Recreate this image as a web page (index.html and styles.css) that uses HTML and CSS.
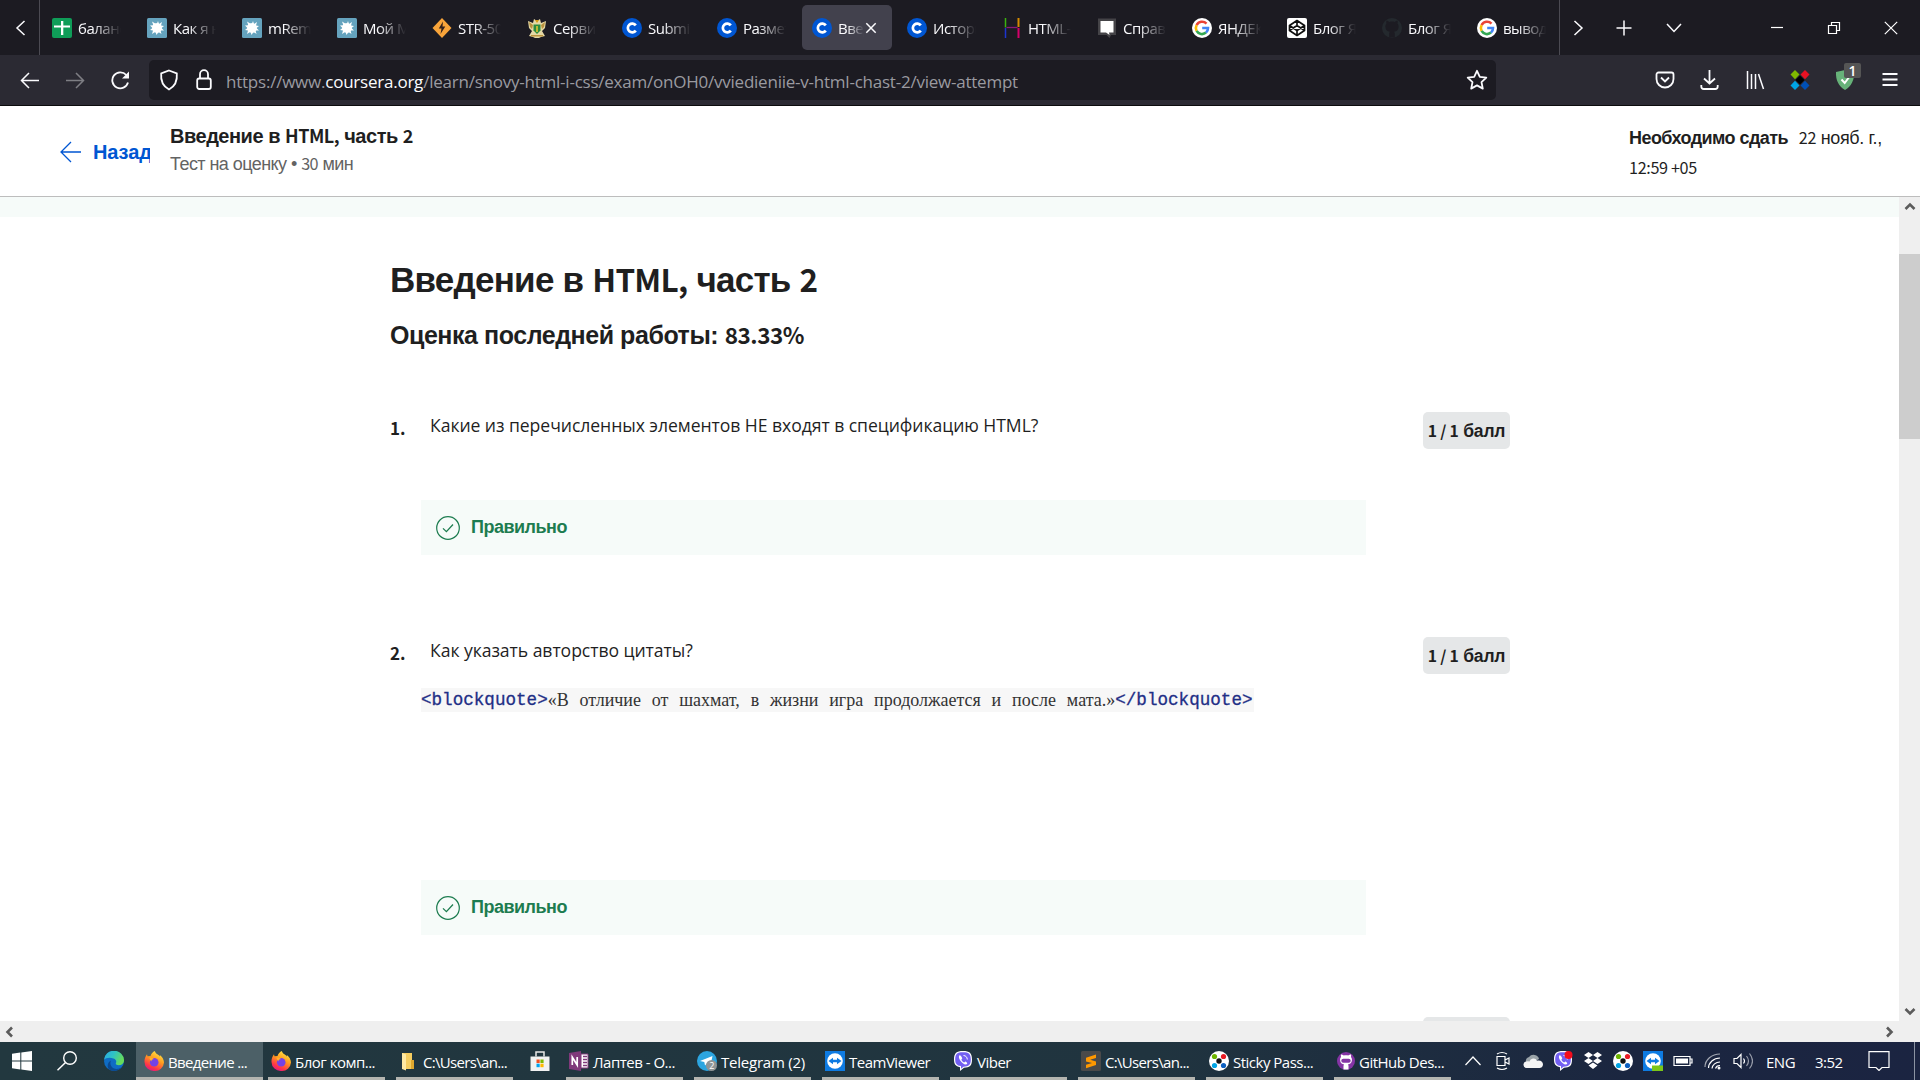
FILE: index.html
```html
<!DOCTYPE html>
<html lang="ru">
<head>
<meta charset="utf-8">
<title>Введение в HTML, часть 2</title>
<link rel="stylesheet" href="styles.css">
</head>
<body>
<svg class="defs" width="0" height="0" aria-hidden="true">
  <symbol id="coursera" viewBox="0 0 20 20"><circle cx="10" cy="10" r="10" fill="#0056d2"/><path d="M13.800 7.400A4.400 4.400 0 1 0 13.800 12.600" fill="none" stroke="#fff" stroke-width="2.700"/></symbol>
  <symbol id="habr" viewBox="0 0 20 20"><rect width="20" height="20" rx="1.500" fill="#65a3be"/><path d="M10 5.500L11 3l1 3 3-2-1 3.500 3 .5-2.500 2 2.500 2.500-3.500 0 1 3.500-3-2L9.500 17l-1-3.200L5 16l1-3.500-3-.5 2.500-2L3 7.500l3.300-.3L5 3.500l3.200 2z" fill="#fff"/><circle cx="10" cy="10" r="4.800" fill="#fff"/></symbol>
  <symbol id="google" viewBox="0 0 20 20"><circle cx="10" cy="10" r="10" fill="#fff"/><path d="M14.500 5.600A6.200 6.200 0 0 0 4.600 7.100" fill="none" stroke="#ea4335" stroke-width="2.600"/><path d="M4.600 7.100A6.200 6.200 0 0 0 4.600 12.900" fill="none" stroke="#fbbc05" stroke-width="2.600"/><path d="M4.600 12.900A6.200 6.200 0 0 0 14 14.600" fill="none" stroke="#34a853" stroke-width="2.600"/><path d="M14 14.600A6.200 6.200 0 0 0 16 10H10.200" fill="none" stroke="#4285f4" stroke-width="2.600"/></symbol>
  <symbol id="sticky" viewBox="0 0 20 24" preserveAspectRatio="none"><path d="M5 0l4.500 5.500L5 11 .5 5.500z" fill="#7fba00"/><path d="M15 0l4.500 5.500L15 11l-4.500-5.500z" fill="#e81123"/><path d="M10 6.500l4.500 5.500-4.500 5.500L5.500 12z" fill="#000"/><path d="M5 13l4.500 5.500L5 24 .5 18.500z" fill="#00a4e4"/><path d="M15 13l4.500 5.500L15 24l-4.500-5.500z" fill="#0050b5"/></symbol>
  <symbol id="stickyround" viewBox="0 0 20 20"><circle cx="10" cy="10" r="10" fill="#fff"/><circle cx="5.500" cy="5.500" r="2.600" fill="#6cb500"/><circle cx="14.500" cy="5.500" r="2.600" fill="#e81c24"/><circle cx="10" cy="10" r="2.700" fill="#111"/><circle cx="5.500" cy="14.500" r="2.600" fill="#00a4e4"/><circle cx="14.500" cy="14.500" r="2.600" fill="#0b5fc0"/></symbol>
  <linearGradient id="ffg" x1=".8" y1="0" x2=".3" y2="1"><stop offset="0" stop-color="#fff04a"/><stop offset=".45" stop-color="#ff9a1f"/><stop offset=".8" stop-color="#ff3647"/><stop offset="1" stop-color="#e31587"/></linearGradient>
  <symbol id="firefox" viewBox="0 0 20 20"><path d="M10.800 0c.5 2 2 3 4 4.300l1.200 1.200-.2-1.500c2.400 1.800 4.200 4.600 4.200 7.600A9.300 9 0 0 1 10.300 20 9.500 9.200 0 0 1 .5 11C.4 8 1.200 5.600 3 3.300l.5 2L6.500 5C7.300 2.600 8.800 1 10.800 0z" fill="url(#ffg)"/><circle cx="10.200" cy="11.200" r="4.300" fill="#7542e5"/><path d="M5.500 6.600c2 0 3 .4 4.500 1.500-1.600 0-2.600 1-2.700 2.300-.8-.9-1.700-2.100-1.800-3.800z" fill="#ffb12b"/></symbol>
  <symbol id="tv" viewBox="0 0 20 20"><rect width="20" height="20" fill="#0e7be2"/><circle cx="10" cy="10" r="7.800" fill="#fff"/><path d="M3.500 10L8 6.800v2h4v-2l4.500 3.200-4.500 3.200v-2H8v2z" fill="#0e7be2"/></symbol>
  <symbol id="viber" viewBox="0 0 20 20"><path d="M10 0c6.500 0 9 2 9 8.500S16.500 16.500 11 16.800L7 20v-3.800C2.500 15.300 1 13 1 8.500 1 2 3.500 0 10 0z" fill="#fff"/><path d="M10 1.200c5.800 0 7.800 1.700 7.800 7.300s-2 7-7.300 7.200L8 17.800v-2.700C3.600 14.500 2.200 12.500 2.200 8.500 2.200 3 4.200 1.200 10 1.200z" fill="#7360f2"/><path d="M6.600 4.200c-2.600 1.600 2.300 9.300 6.300 9.400 2.200-1 1.300-2.300-.5-3.200l-1.200 1c-1.500-.5-2.500-1.800-2.800-3l.9-1.200c-.6-1.400-1.500-3-2.700-3z" fill="#fff"/><path d="M10.500 4.500c2.300.2 3.700 1.600 3.800 4" fill="none" stroke="#fff"/></symbol>
  <symbol id="octo" viewBox="0 0 20 20"><path d="M10 3.500c-1 0-1.700.2-2.500.4C6.300 3 5 2.600 4.500 2.700c-.4 1-.3 2 0 2.800C3.600 6.600 3.300 7.700 3.400 9c.2 3.300 2 4.400 4.500 4.800-.5.500-.7 1.200-.7 2v3.700h5.600v-3.700c0-.8-.2-1.500-.7-2 2.500-.4 4.300-1.500 4.500-4.800.1-1.300-.2-2.400-1.100-3.500.3-.8.4-1.800 0-2.800-.5-.1-1.800.3-3 1.200-.8-.2-1.500-.4-2.500-.4z"/></symbol>
  <symbol id="ok" viewBox="0 0 24 24"><circle cx="12" cy="12" r="11.300" fill="none" stroke="#1d7c50" stroke-width="1.200"/><path d="M7 12.400l3.400 3.200L17 8.500" fill="none" stroke="#1d7c50" stroke-width="1.300"/></symbol>
</svg>

<header class="tabbar">
  <div class="tab-scroll left"><svg width="12" height="18" viewBox="0 0 12 18"><path class="ln" d="M10.500 2L3 9l7.500 7"/></svg></div>
  <div class="tabs">
    <div class="tab"><svg class="fav" viewBox="0 0 20 20"><rect width="20" height="20" rx="2" fill="#0f9d58"/><path d="M9 3h2.300v4.500H18v2h-6.700V17H9V9.500H2v-2h7z" fill="#fff"/></svg><span class="tt">баланс</span></div>
    <div class="tab"><svg class="fav"><use href="#habr"/></svg><span class="tt">Как я на</span></div>
    <div class="tab"><svg class="fav"><use href="#habr"/></svg><span class="tt">mRemo</span></div>
    <div class="tab"><svg class="fav"><use href="#habr"/></svg><span class="tt">Мой Ma</span></div>
    <div class="tab"><svg class="fav" viewBox="0 0 20 20"><path d="M10 0l9.500 10L10 20 .5 10z" fill="#f8a43a"/><path d="M11 3.500L6.800 10.500h2.700l-1 5.500 4.800-7.500h-2.800z" fill="#34211b"/></svg><span class="tt">STR-500</span></div>
    <div class="tab"><svg class="fav" viewBox="0 0 20 20"><path d="M1 3l5 2 1-4 3 2 3-2 1 4 5-2-1 7-3 3 3 5-4 1-4 2-4-2-4-1 3-5-3-3z" fill="#e4d8a4"/><path d="M2 4l4 3-1 4-2-2zM18 4l-4 3 1 4 2-2zM4 17h12v1.500H4z" fill="#b9923d"/><path d="M6.500 6.500h7v6L10 16l-3.500-3.500z" fill="#2d8b3b"/><path d="M8 2h4l-2 3z" fill="#d59c12"/><path d="M10 8v6" stroke="#e8c92f" stroke-width="1.500"/></svg><span class="tt">Сервис</span></div>
    <div class="tab"><svg class="fav"><use href="#coursera"/></svg><span class="tt">Submis</span></div>
    <div class="tab"><svg class="fav"><use href="#coursera"/></svg><span class="tt">Размет</span></div>
    <div class="tab active"><svg class="fav"><use href="#coursera"/></svg><span class="tt">Введ</span><svg class="x" width="12" height="12" viewBox="0 0 12 12"><path class="ln" d="M1.300 1.300l9.400 9.400M10.700 1.300L1.300 10.700"/></svg></div>
    <div class="tab"><svg class="fav"><use href="#coursera"/></svg><span class="tt">Истори</span></div>
    <div class="tab"><svg class="fav" viewBox="0 0 20 20"><path d="M3.500 0v9.500" stroke="#3bb30f" stroke-width="1.500"/><path d="M3.500 10v10" stroke="#1c35d0" stroke-width="1.500"/><path d="M16.500 0v9" stroke="#d58b00" stroke-width="2"/><path d="M16.500 10v10" stroke="#d4006a" stroke-width="2"/><path d="M4.500 9.500h11" stroke="#8b1a79" stroke-width="1.300"/></svg><span class="tt">HTML-к</span></div>
    <div class="tab"><svg class="fav" viewBox="0 0 20 20"><path d="M1 .5h18v16.500h-5l-1.500 3-3-3H1z" fill="#444347"/><path d="M3.500 3h13v11.500H12L12.500 17 9 14.500H3.500z" fill="#fff"/></svg><span class="tt">Справо</span></div>
    <div class="tab"><svg class="fav"><use href="#google"/></svg><span class="tt">ЯНДЕКС</span></div>
    <div class="tab"><svg class="fav" viewBox="0 0 20 20"><rect width="20" height="20" rx="2" fill="#fff"/><path d="M10 2.500L17.500 7.500v5L10 17.500 2.500 12.500v-5zM10 2.500v5M10 12.500v5M2.500 7.500L10 12.500l7.500-5M2.500 12.500L10 7.500l7.500 5" fill="none" stroke="#111" stroke-width="1.700" stroke-linejoin="round"/></svg><span class="tt">Блог Ян</span></div>
    <div class="tab"><svg class="fav" viewBox="0 0 20 20"><circle cx="10" cy="10" r="10" fill="#24292e"/><use href="#octo" fill="#1c1b22"/></svg><span class="tt">Блог Ян</span></div>
    <div class="tab"><svg class="fav"><use href="#google"/></svg><span class="tt">вывод</span></div>
  </div>
  <div class="tab-scroll right"><svg width="12" height="18" viewBox="0 0 12 18"><path class="ln" d="M1.500 2L9 9l-7.500 7"/></svg></div>
  <div class="tab-tools">
    <svg width="16" height="16" viewBox="0 0 16 16"><path class="ln" d="M8 .5v15M.5 8h15"/></svg>
    <svg width="16" height="10" viewBox="0 0 16 10"><path class="ln" d="M1 1l7 7.500L15 1"/></svg>
  </div>
  <div class="win">
    <svg width="14" height="14" viewBox="0 0 14 14"><path class="th" d="M1 6.500h12"/></svg>
    <svg width="14" height="14" viewBox="0 0 14 14"><path class="th" d="M1.500 4.500h8v8h-8zM4.500 4.500v-3h8v8h-3"/></svg>
    <svg width="14" height="14" viewBox="0 0 14 14"><path class="th" d="M.8.8l12.400 12.400M13.200.8L.8 13.200"/></svg>
  </div>
</header>

<nav class="navbar">
  <div class="nav-left">
    <svg width="20" height="20" viewBox="0 0 20 20"><path class="ln" d="M19 10.500H1.500M9 3L1.500 10.500 9 18"/></svg>
    <svg class="dim" width="20" height="20" viewBox="0 0 20 20"><path class="ln" d="M1 10.500h17.500M11 3l7.500 7.500L11 18"/></svg>
    <svg width="20" height="20" viewBox="0 0 20 20"><path class="ln wide" d="M18 12.500A8 8 0 1 1 16.300 5"/><path d="M19 1.500v7h-7z" fill="#fbfbfe"/></svg>
  </div>
  <div class="urlbar">
    <svg width="20" height="22" viewBox="0 0 20 22"><path class="ln wide" d="M10 1.500l7.800 3c.6 6.500-1.300 12.500-7.800 16C3.500 17 1.600 11 2.200 4.500z"/></svg>
    <svg class="lock" width="16" height="22" viewBox="0 0 16 22"><rect class="ln wide" x="1.200" y="9.500" width="13.600" height="10.500" rx="2"/><path class="ln wide" d="M4 9.500V5.200a4 4 0 0 1 8 0v4.300"/></svg>
    <span class="url">https://www.<b>coursera.org</b>/learn/snovy-html-i-css/exam/onOH0/vviedieniie-v-html-chast-2/view-attempt</span>
    <svg class="star" width="22" height="22" viewBox="0 0 22 22"><path class="ln wide" d="M11 1.800l2.800 6 6.500.8-4.800 4.500 1.300 6.500L11 16.400l-5.800 3.200 1.300-6.500L1.700 8.600l6.500-.8z" stroke-linejoin="round"/></svg>
  </div>
  <div class="nav-right">
    <svg width="20" height="20" viewBox="0 0 20 20"><path class="ln wide" d="M3.500 2.500h13a2 2 0 0 1 2 2V9a8.500 8.500 0 0 1-17 0V4.500a2 2 0 0 1 2-2zM6 7.500l4 4 4-4"/></svg>
    <svg width="20" height="20" viewBox="0 0 20 20"><path class="ln wide" d="M9.500 0v13.500M4 8.500l5.500 5 5.500-5M1.300 15v1.500a2.500 2.500 0 0 0 2.500 2.500h11.400a2.500 2.500 0 0 0 2.500-2.500V15"/></svg>
    <svg width="20" height="20" viewBox="0 0 20 20"><path class="ln" d="M2.500 1v18M6.500 4v15M10.500 4v15M13.500 4l5 15"/></svg>
    <svg width="20" height="20"><use href="#sticky" width="20" height="20"/></svg>
    <div class="guard"><svg width="20" height="20" viewBox="0 0 20 20"><path d="M10 0l9 2c.4 8-2.500 14-9 18C3.500 16 .6 10 1 2z" fill="#67b279"/><path d="M6.500 9.500l3.200 3.500 4.500-6" fill="none" stroke="#fff" stroke-width="2"/></svg><i>1</i></div>
    <svg width="20" height="20" viewBox="0 0 20 20"><path class="ln wide" d="M2.500 4h15M2.500 9.500h15M2.500 15h15"/></svg>
  </div>
</nav>

<div class="page-head">
  <a class="back"><svg width="21" height="22" viewBox="0 0 21 22"><path d="M21 11H1M11 1L1 11l10 10" fill="none" stroke="#0056d2" stroke-width="1.300"/></svg><span>Назад</span></a>
  <div class="head-title">
    <div class="ht">Введение в <span class="src">HTML,</span> часть <span class="src">2</span></div>
    <div class="hs">Тест на оценку • <span class="src">30</span> мин</div>
  </div>
  <div class="due"><b>Необходимо сдать</b> <span class="date"><span class="src">22</span> нояб. г.,</span><br><span class="src">12:59 +05</span></div>
</div>

<div class="viewport">
  <main class="content">
    <div class="band"></div>
    <div class="exam">
      <h1>Введение в <span class="src">HTML,</span> часть <span class="src">2</span></h1>
      <h2>Оценка последней работы: <span class="src">83.33%</span></h2>
      <section class="q q1">
        <div class="num src">1.</div>
        <div class="body">
          <p class="ask">Какие из перечисленных элементов НЕ входят в спецификацию HTML?</p>
          <div class="result"><svg width="24" height="24"><use href="#ok"/></svg><span>Правильно</span></div>
        </div>
        <div class="badge"><span class="src">1 / 1</span> балл</div>
      </section>
      <section class="q q2">
        <div class="num src">2.</div>
        <div class="body">
          <p class="ask">Как указать авторство цитаты?</p>
          <div class="code"><code>&lt;blockquote&gt;</code><span class="quote">«В отличие от шахмат, в жизни игра продолжается и после мата.»</span><code>&lt;/blockquote&gt;</code></div>
          <div class="result"><svg width="24" height="24"><use href="#ok"/></svg><span>Правильно</span></div>
        </div>
        <div class="badge"><span class="src">1 / 1</span> балл</div>
      </section>
      <section class="q q3">
        <div class="badge"></div>
      </section>
    </div>
  </main>
  <div class="vscroll"><svg width="12" height="9" viewBox="0 0 12 9"><path d="M1.500 7L6 2.500 10.500 7"/></svg><div class="thumb"></div><svg class="end" width="12" height="9" viewBox="0 0 12 9"><path d="M1.500 2L6 6.500 10.500 2"/></svg></div>
</div>
<div class="hscroll"><svg width="9" height="12" viewBox="0 0 9 12"><path d="M7 1.500L2.500 6 7 10.500"/></svg><svg width="9" height="12" viewBox="0 0 9 12"><path d="M2 1.500L6.500 6 2 10.500"/></svg></div>

<footer class="taskbar">
  <div class="sys"><svg width="20" height="20" viewBox="0 0 20 20"><path d="M0 2.700L8.300 1.500v8H0zM9.300 1.400L20 0v9.500H9.300zM0 10.500h8.300v8L0 17.300zM9.300 10.500H20V20L9.300 18.600z" fill="#fff"/></svg></div>
  <div class="sys search"><svg width="22" height="20" viewBox="0 0 22 20"><circle cx="14" cy="7" r="6.300" fill="none" stroke="#fff" stroke-width="1.400"/><path d="M9.500 11.500L1.500 19.300" stroke="#fff" stroke-width="1.500"/></svg></div>
  <div class="sys edge"><svg width="20" height="20" viewBox="0 0 20 20"><defs><linearGradient id="eg" x1="0" y1="0" x2="1" y2=".4"><stop offset="0" stop-color="#2aa7e8"/><stop offset=".5" stop-color="#2fc3c4"/><stop offset="1" stop-color="#66dc5a"/></linearGradient></defs><circle cx="10" cy="10" r="10" fill="#0f6cc4"/><path d="M0 9A10 9.500 0 0 1 20 9.500c0 3-2.500 4.700-5 4.700-2.200 0-3.600-1-3.200-2 .8-1 .8-3.700-2.300-4.700C5.500 6 1.500 7 0 9z" fill="url(#eg)"/><path d="M7 9.500c-2 4 1.200 8.500 5.500 8.500 2.500 0 4.500-1 5.700-2.400C15.500 20 10 21 6 19c-3.500-2-3-7.500 1-9.500z" fill="#0b4a92"/></svg></div>
  <div class="task on"><svg width="20" height="20"><use href="#firefox"/></svg><span>Введение ...</span></div>
  <div class="task"><svg width="20" height="20"><use href="#firefox"/></svg><span>Блог комп...</span></div>
  <div class="task"><svg width="20" height="20" viewBox="0 0 20 20"><path d="M3 2h10v16H3z" fill="#f5cd60"/><path d="M3 2l4 1.500v16L3 18z" fill="#ffe9a3"/><path d="M12 9h3v9h-3z" fill="#e0a92e"/></svg><span class="path">C:\Users\an...</span></div>
  <div class="store"><svg width="20" height="20" viewBox="0 0 20 20"><path d="M6 5.500V1h8v4.500" fill="none" stroke="#e9e9e9" stroke-width="1.500"/><path d="M.5 5.500h19V20H.5z" fill="#f2f2f2"/><path d="M6.500 8.500h3.200v3.500H6.500z" fill="#f25022"/><path d="M10.400 8.500h3.200v3.500h-3.200z" fill="#7fba00"/><path d="M6.500 12.700h3.200v3.500H6.500z" fill="#00a4ef"/><path d="M10.400 12.700h3.200v3.500h-3.200z" fill="#ffb900"/></svg></div>
  <div class="task"><svg width="20" height="20" viewBox="0 0 20 20"><path d="M12 3h7v14h-7z" fill="#fff" stroke="#80397b"/><path d="M0 2l12-2v20L0 18z" fill="#80397b"/><path d="M14 5.500h4M14 8.500h4M14 11.500h4M14 14.500h4" stroke="#80397b" stroke-width="1.300"/><path d="M3.300 14V6.200L8.200 14V6" fill="none" stroke="#fff" stroke-width="1.700"/></svg><span>Лаптев - O...</span></div>
  <div class="task"><svg width="20" height="20" viewBox="0 0 20 20"><circle cx="10" cy="10" r="10" fill="#2ca5e0"/><path d="M3 10l12.500-5-2 9.500-3.500-2-2 2-.7-3.500z" fill="#fff"/><circle cx="14.500" cy="14.500" r="5.500" fill="#8f9496"/><text x="12.300" y="18" font-size="9" fill="#fff">2</text></svg><span class="tg">Telegram (2)</span></div>
  <div class="task"><svg width="20" height="20"><use href="#tv"/></svg><span>TeamViewer</span></div>
  <div class="task"><svg width="20" height="20"><use href="#viber"/></svg><span>Viber</span></div>
  <div class="task"><svg width="20" height="20" viewBox="0 0 20 20"><rect width="20" height="20" rx="1.500" fill="#4a4a4a"/><path d="M15 3.500L5 6.700v3.700l6 1.700-6 1.700v3.500l10-3.200v-3.700L9.200 8.700 15 7z" fill="#ff9800"/></svg><span class="path">C:\Users\an...</span></div>
  <div class="task"><svg width="20" height="20"><use href="#stickyround"/></svg><span>Sticky Pass...</span></div>
  <div class="task last"><svg width="18" height="20" viewBox="0 0 20 20"><circle cx="10" cy="10" r="10" fill="#8534a5"/><use href="#octo" fill="#fff"/><path d="M7 7.500h6a2 2 0 0 1 0 4.500H7a2 2 0 0 1 0-4.500z" fill="#8534a5"/></svg><span>GitHub Des...</span></div>
  <div class="tray">
    <svg viewBox="0 0 20 20"><path class="th" d="M2.500 14L10 6l7.500 8" stroke-width="1.500"/></svg>
    <svg viewBox="0 0 20 20"><path class="th" d="M4 5.500h8v9H4zM12 9l4-2v6l-4-2M4 3q5-3 10 0M4 17q5 3 10 0" stroke-width="1.300"/></svg>
    <svg viewBox="0 0 20 20"><path d="M3 11a4 4 0 0 1 3-5 5.500 5 0 0 1 10 2l-7 4z" fill="#9aa3a8"/><path d="M3.500 17a3.300 3.300 0 0 1-.5-6.500q2-.7 3.500 0a4 3.800 0 0 1 7.500-.8c4-.7 6 1.300 6 3.800s-2 3.500-3.500 3.500z" fill="#f4f4f4"/></svg>
    <svg viewBox="0 0 20 20"><use href="#viber" width="20" height="20"/><circle cx="15.500" cy="4" r="4" fill="#f30c1c"/></svg>
    <svg viewBox="0 0 20 20"><path d="M5.500 1L10 4 5.500 7 1 4zM14.500 1L19 4l-4.500 3L10 4zM5.500 7l4.500 3-4.500 3L1 10zM14.500 7l4.500 3-4.500 3-4.500-3zM10 11.500l4.500 3L10 18l-4.500-3.500z" fill="#fff"/></svg>
    <svg viewBox="0 0 20 20"><use href="#stickyround" width="20" height="20"/></svg>
    <svg viewBox="0 0 20 20"><use href="#tv" width="20" height="20"/><path d="M9 14.500h11V20H9z" fill="#7bc618"/></svg>
    <svg viewBox="0 0 20 20"><path class="th" d="M1 5.500h16v9H1zM17.500 8h1.500v4h-1.500"/><path d="M3 7.500h12v5H3z" fill="#fff"/></svg>
    <svg viewBox="0 0 20 20"><path d="M2 16A15 13 0 0 1 17 3" class="th" opacity=".6"/><path class="th" d="M5.500 17A11.500 10 0 0 1 17 7M9 17.500A8 7 0 0 1 17 11M12.500 17.500A4.500 4 0 0 1 17 14.500" stroke-width="1.300"/><circle cx="16" cy="17" r="1.500" fill="#fff"/></svg>
    <svg viewBox="0 0 20 20"><path class="th" d="M1 7.500h3l4-4v13l-4-4H1zM10.500 7.500q2 2.500 0 5"/><path class="th" opacity=".55" d="M13.500 5q4 5 0 10M16.500 2.500q6 7.500 0 15"/></svg>
  </div>
  <div class="lang">ENG</div>
  <div class="time">3:52</div>
  <svg class="note" width="22" height="20" viewBox="0 0 22 20"><path class="th" d="M1 .7h20V16.500h-7L11 19.500 8 16.500H1z" stroke-width="1.400"/></svg>
  <div class="peek"></div>
</footer>
</body>
</html>
```
FILE: styles.css
```css
* { box-sizing: border-box; }
body { margin: 0; width: 1920px; height: 1080px; overflow: hidden; background: #fff; display: flex; flex-direction: column; font-family: "Open Sans", "Noto Sans", sans-serif; color: #1f1f1f; }
svg { display: block; flex: none; }
.defs { position: absolute; }
.ln { fill: none; stroke: #fbfbfe; stroke-width: 1.5; }
.wide { stroke-width: 1.8; }
.th { fill: none; stroke: #fff; stroke-width: 1.2; }

.tabbar { height: 55px; flex: none; background: #1c1b22; display: flex; align-items: center; }
.tab-scroll { height: 55px; display: flex; align-items: center; }
.left { width: 40px; padding-left: 14px; border-right: 1px solid #4b4a52; }
.right { width: 41px; padding-left: 13px; border-left: 1px solid #4b4a52; }
.tabs { width: 1519px; display: flex; }
.tab { width: 90px; height: 45px; margin: 0 3px 0 2px; padding-left: 10px; border-radius: 5px; display: flex; align-items: center; flex: none; }
.fav { width: 20px; height: 20px; margin-right: 6px; }
.tt { width: 43px; overflow: hidden; white-space: nowrap; font-size: 15px; letter-spacing: -.5px; line-height: 22px; color: #fbfbfe; -webkit-mask-image: linear-gradient(90deg, #000 35%, transparent); mask-image: linear-gradient(90deg, #000 35%, transparent); padding-top: 1px; }
.active { background: #42414d; }
.active .tt { width: 26px; margin-right: 1px; }
.tab-tools { display: flex; align-items: center; gap: 34px; margin-left: 16px; }
.win { display: flex; margin-left: auto; gap: 43px; padding-right: 22px; }

.navbar { height: 51px; flex: none; background: #2b2a33; border-bottom: 1px solid #0c0c0d; display: flex; align-items: center; }
.nav-left { width: 149px; padding-left: 20px; display: flex; gap: 25px; }
.dim { opacity: .4; }
.urlbar { width: 1347px; height: 40px; padding: 0 8px 0 10px; background: #1c1b22; border-radius: 5px; display: flex; align-items: center; }
.lock { margin: 0 14px 0 17px; }
.url { flex: 1; font-size: 17px; letter-spacing: -.23px; line-height: 24px; color: #9a9aa0; white-space: nowrap; padding-top: 3px; }
.url b { font-weight: 400; color: #fbfbfe; }
.nav-right { display: flex; gap: 25px; margin-left: auto; padding-right: 20px; }
.guard { position: relative; }
.guard i { position: absolute; left: 9px; top: -7px; width: 17px; height: 15px; background: #555; border-radius: 2px; color: #fff; font: 600 14px/15px "Open Sans", sans-serif; text-align: center; }

.src { font-family: "Noto Sans CJK SC", sans-serif; font-size: .9em; line-height: 1; }
.page-head { height: 91px; flex: none; border-bottom: 1px solid #bdbdbd; display: flex; font-family: "Liberation Sans", Arial, sans-serif; white-space: nowrap; }
.back { width: 151px; padding: 2px 0 0 60px; display: flex; align-items: center; gap: 12px; color: #0056d2; font-weight: 700; font-size: 20px; overflow: hidden; letter-spacing: -.1px; }
.back span { width: 57px; overflow: hidden; }
.head-title { margin-left: 19px; padding-top: 18px; }
.ht { font-size: 20px; letter-spacing: -.48px; font-weight: 700; line-height: 25px; height: 27px; }
.hs { font-size: 18px; letter-spacing: -.56px; line-height: 26px; color: #636363; }
.due { margin-left: auto; width: 291px; padding-top: 17px; font-size: 18px; line-height: 30px; letter-spacing: -.35px; }
.due b { letter-spacing: -.55px; margin-right: 6px; }

.viewport { flex: 1; min-height: 0; display: flex; }
.content { flex: 1; overflow: hidden; height: 824px; }
.band { height: 20px; background: #f6fbf9; }
.exam { width: 1120px; margin-left: 390px; }
h1, h2, p { margin: 0; white-space: nowrap; font-family: "Liberation Sans", Arial, sans-serif; }
h1 { font-size: 35px; letter-spacing: -.75px; line-height: 40px; height: 40px; margin-top: 43px; }
h2 { font-size: 25px; letter-spacing: -.45px; line-height: 30px; height: 30px; margin-top: 20px; }
.q { display: flex; }
.q1 { margin-top: 62px; height: 225px; }
.q2 { height: 380px; }
.num { width: 31px; font-size: 17px; font-weight: 700; line-height: 32px; }
.body { width: 945px; }
.ask { font-family: "Open Sans", sans-serif; font-size: 17.6px; letter-spacing: -.06px; line-height: 26px; height: 28px; padding-left: 9px; }
.result { height: 55px; background: #f6fbf9; display: flex; align-items: center; padding-left: 15px; gap: 11px; color: #1d7c50; font: 700 18px "Liberation Sans", Arial, sans-serif; letter-spacing: -.5px; }
.q1 .result { margin-top: 60px; }
.code { margin-top: 23px; height: 24px; width: 833px; background: #f7f7f7; display: flex; align-items: center; white-space: nowrap; color: #333; }
.code code { font: 17.6px "Liberation Mono", monospace; color: #1f2f86; -webkit-text-stroke: .3px #1f2f86; }
.quote { font: 18px "Liberation Serif", serif; word-spacing: 6.3px; }
.q2 .result { margin-top: 168px; }
.badge { width: 87px; height: 37px; margin-left: 57px; border-radius: 5px; background: #e5e7e8; font: 700 17.5px/38px "Liberation Sans", Arial, sans-serif; letter-spacing: -.2px; white-space: nowrap; text-align: center; }
.q3 { justify-content: flex-end; padding-right: 0; }

.vscroll { width: 21px; background: #efefef; padding-top: 5px; display: flex; flex-direction: column; align-items: center; }
.vscroll path, .hscroll path { fill: none; stroke: #5b5b5b; stroke-width: 2.6; }
.thumb { width: 21px; height: 185px; background: #cdcdcd; margin-top: 43px; }
.end { margin-top: auto; margin-bottom: 5px; }
.hscroll { height: 21px; flex: none; background: #efefef; display: flex; justify-content: space-between; align-items: center; padding: 0 26px 0 5px; }

.taskbar { height: 38px; flex: none; background: linear-gradient(90deg, #22383f 0%, #20343f 60%, #1b2640 85%, #1b2441 100%); display: flex; color: #fff; font-size: 15px; letter-spacing: -.5px; line-height: 20px; white-space: nowrap; }
.sys { width: 46px; display: flex; align-items: center; padding-left: 12px; }
.search { padding-left: 10px; }
.edge { width: 44px; }
.task { width: 117px; margin: 0 6px 0 5px; border-bottom: 3px solid #b4b5b0; padding: 2px 0 0 3px; display: flex; align-items: center; gap: 4px; flex: none; }
.task span { padding-top: 2px; }
.task .path { letter-spacing: -.68px; }
.task .tg { letter-spacing: -.22px; }
.on { width: 127px; margin: 0; padding-left: 8px; background: #4c6067; }
.on span { letter-spacing: -.65px; }
.store { width: 42px; display: flex; align-items: center; justify-content: center; }
.tray { display: flex; align-items: center; gap: 10px; margin-left: 6px; }
.tray svg { width: 20px; height: 20px; }
.lang, .time { display: flex; align-items: center; padding-top: 1px; }
.lang { margin-left: 13px; width: 49px; }
.time { width: 53px; }
.note { align-self: center; }
.peek { margin-left: auto; width: 6px; border-left: 1px solid #8b93a2; }
```
